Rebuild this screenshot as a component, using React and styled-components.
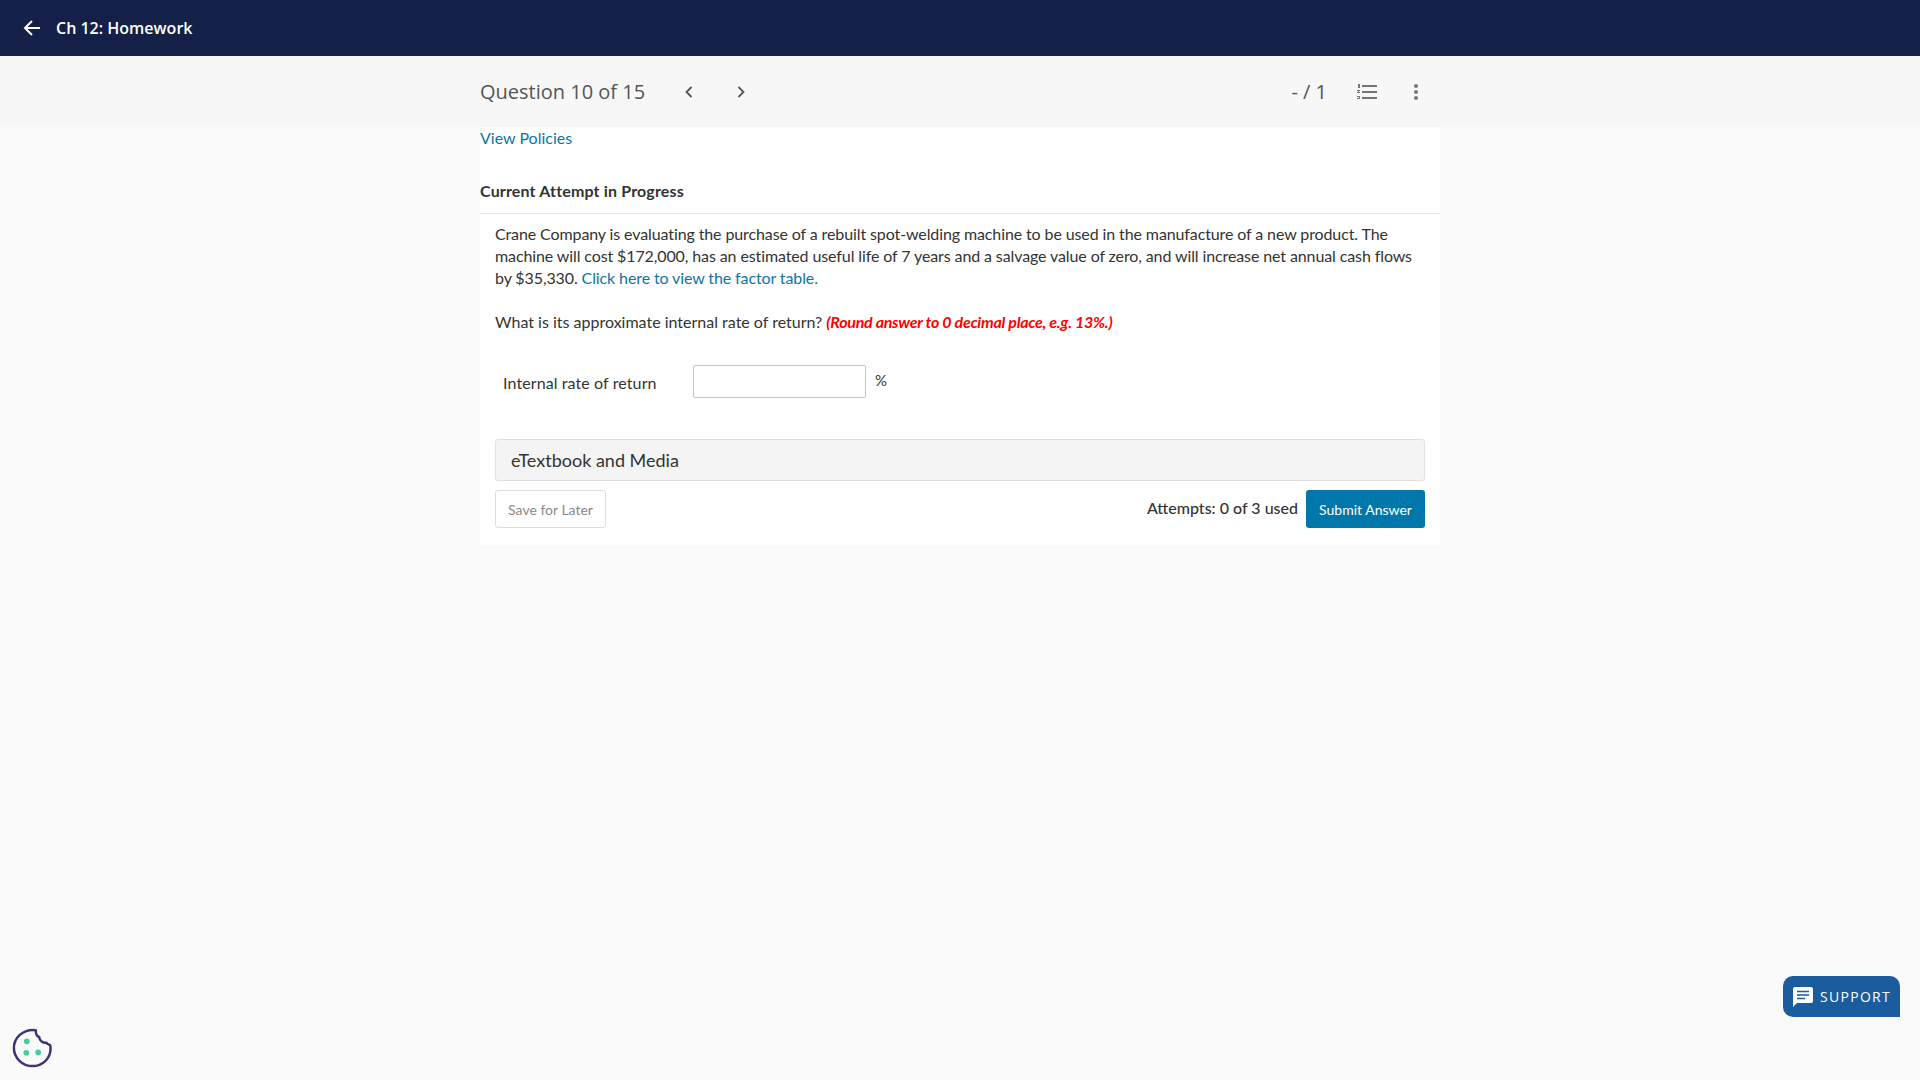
import React from "react";
import styled, { createGlobalStyle } from "styled-components";

const Global = createGlobalStyle`
  html, body { margin: 0; padding: 0; background: #fafafa; }
  * { box-sizing: border-box; }
`;

const Page = styled.div`
  min-height: 1080px;
  background: #fafafa;
  font-family: Lato, sans-serif;
  color: #333;
  position: relative;
  overflow: hidden;
`;

const TopBar = styled.header`
  height: 56px;
  background: #142048;
  display: flex;
  align-items: center;
  padding-left: 22px;
  gap: 14px;
  color: #fff;
`;

const TopTitle = styled.span`
  font-family: "Open Sans", sans-serif;
  font-size: 16px;
  font-weight: 600;
`;

const SubBar = styled.div`
  height: 71px;
  background: #f7f7f7;
  display: flex;
  justify-content: center;
`;

const SubInner = styled.div`
  width: 960px;
  display: flex;
  align-items: center;
`;

const QuestionTitle = styled.span`
  font-family: "Open Sans", sans-serif;
  font-size: 20px;
  color: #555;
  width: 203px;
`;

const NavArrow = styled.span`
  width: 52px;
  display: flex;
  color: #555;
`;

const Score = styled.span`
  margin-left: auto;
  font-family: "Open Sans", sans-serif;
  font-size: 20px;
  color: #555;
  margin-right: 30px;
`;

const MenuIcons = styled.div`
  display: flex;
  align-items: center;
  gap: 36px;
  margin-right: 21px;
  color: #757575;
`;

const Panel = styled.main`
  width: 960px;
  height: 418px;
  margin: 0 auto;
  background: #fff;
  display: flex;
  flex-direction: column;
`;

const PolicyLink = styled.a`
  color: #0d75a8;
  font-size: 16px;
  line-height: 20px;
  margin-top: 1px;
`;

const AttemptTitle = styled.div`
  font-size: 16px;
  font-weight: 700;
  color: #333;
  letter-spacing: 0.16px;
  line-height: 22px;
  height: 34px;
  margin-top: 32px;
  border-bottom: 1px solid #e8e8e8;
`;

const Body = styled.div`
  padding: 9px 15px 0;
`;

const Para = styled.p`
  margin: 0;
  font-size: 16px;
  line-height: 22px;
  letter-spacing: -0.11px;
  color: #333;
`;

const Question = styled(Para)`
  margin-top: 22px;
  letter-spacing: 0;
`;

const TextLink = styled.a`
  color: #0d75a8;
`;

const Hint = styled.em`
  color: #ff0000;
  font-weight: 700;
  letter-spacing: -0.27px;
`;

const AnswerRow = styled.div`
  display: flex;
  align-items: center;
  margin-top: 32px;
  padding-left: 8px;
`;

const AnswerLabel = styled.label`
  font-size: 16px;
  letter-spacing: 0.1px;
  width: 190px;
  color: #333;
  padding-top: 1px;
`;

const AnswerInput = styled.input`
  width: 173px;
  height: 33px;
  border: 1px solid #c4c4c4;
  border-radius: 2px;
  background: #fff;
`;

const Unit = styled.span`
  font-size: 15px;
  margin-left: 9px;
  margin-top: -3px;
  color: #333;
`;

const MediaBar = styled.div`
  height: 42px;
  margin-top: 41px;
  background: #f4f4f4;
  border: 1px solid #e0e0e0;
  border-radius: 3px;
  padding-left: 15px;
  display: flex;
  align-items: center;
  font-size: 18px;
  color: #333;
`;

const Footer = styled.div`
  display: flex;
  align-items: center;
  margin-top: 9px;
`;

const SaveButton = styled.button`
  width: 111px;
  height: 38px;
  background: #fff;
  border: 1px solid #ddd;
  border-radius: 3px;
  color: #8a8a8a;
  font-family: Lato, sans-serif;
  font-size: 14px;
`;

const Attempts = styled.span`
  margin-left: auto;
  font-size: 16px;
  font-weight: 500;
  color: #333;
  margin-right: 8px;
  margin-top: -3px;
`;

const SubmitButton = styled.button`
  width: 119px;
  height: 38px;
  background: #0077aa;
  border: none;
  border-radius: 3px;
  color: #fff;
  font-family: Lato, sans-serif;
  font-size: 14px;
`;

const Support = styled.div`
  position: absolute;
  left: 1783px;
  top: 976px;
  width: 117px;
  height: 41px;
  background: #1b5c9e;
  border-radius: 10px 10px 0 10px;
  color: #fff;
  display: flex;
  align-items: center;
  padding-left: 10px;
  gap: 7px;
  font-family: "Open Sans", sans-serif;
  font-size: 14px;
  letter-spacing: 1.3px;
`;

const Cookie = styled.div`
  position: absolute;
  left: 12px;
  top: 1028px;
  display: flex;
`;

export default function App() {
  return (
    <Page>
      <Global />
      <TopBar>
        <svg width="20" height="20" viewBox="0 0 20 20" fill="none" stroke="#fff" strokeWidth="2">
          <path d="M18 10H3M10 3l-7 7 7 7" />
        </svg>
        <TopTitle>Ch 12: Homework</TopTitle>
      </TopBar>
      <SubBar>
        <SubInner>
          <QuestionTitle>Question 10 of 15</QuestionTitle>
          <NavArrow>
            <svg width="12" height="14" viewBox="0 0 12 14" fill="none" stroke="currentColor" strokeWidth="1.8">
              <path d="M8.5 2L3.5 7l5 5" />
            </svg>
          </NavArrow>
          <NavArrow>
            <svg width="12" height="14" viewBox="0 0 12 14" fill="none" stroke="currentColor" strokeWidth="1.8">
              <path d="M3.5 2l5 5-5 5" />
            </svg>
          </NavArrow>
          <Score>- / 1</Score>
          <MenuIcons>
            <svg width="20" height="16" viewBox="0 0 20 16" fill="currentColor">
              <rect x="5" y="1" width="15" height="2" />
              <rect x="5" y="7" width="15" height="2" />
              <rect x="5" y="13" width="15" height="2" />
              <rect x="1" y="0" width="2" height="4" />
              <rect x="0" y="6" width="3" height="1" />
              <rect x="0" y="8" width="3" height="1" />
              <rect x="1" y="7" width="1" height="1" />
              <rect x="0" y="12" width="3" height="1" />
              <rect x="0" y="14" width="3" height="1" />
              <rect x="2" y="12" width="1" height="3" />
            </svg>
            <svg width="6" height="16" viewBox="0 0 6 16" fill="currentColor">
              <circle cx="3" cy="2" r="2" />
              <circle cx="3" cy="8" r="2" />
              <circle cx="3" cy="14" r="2" />
            </svg>
          </MenuIcons>
        </SubInner>
      </SubBar>
      <Panel>
        <PolicyLink>View Policies</PolicyLink>
        <AttemptTitle>Current Attempt in Progress</AttemptTitle>
        <Body>
          <Para>
            Crane Company is evaluating the purchase of a rebuilt spot-welding machine to be used in the manufacture of a new product. The machine will cost $172,000, has an estimated useful life of 7 years and a salvage value of zero, and will increase net annual cash flows by $35,330. <TextLink>Click here to view the factor table.</TextLink>
          </Para>
          <Question>
            What is its approximate internal rate of return? <Hint>(Round answer to 0 decimal place, e.g. 13%.)</Hint>
          </Question>
          <AnswerRow>
            <AnswerLabel>Internal rate of return</AnswerLabel>
            <AnswerInput />
            <Unit>%</Unit>
          </AnswerRow>
          <MediaBar>eTextbook and Media</MediaBar>
          <Footer>
            <SaveButton>Save for Later</SaveButton>
            <Attempts>Attempts: 0 of 3 used</Attempts>
            <SubmitButton>Submit Answer</SubmitButton>
          </Footer>
        </Body>
      </Panel>
      <Support>
        <svg width="20" height="20" viewBox="0 0 20 20">
          <path d="M2 0h16a2 2 0 0 1 2 2v12a2 2 0 0 1-2 2H4l-4 4V2a2 2 0 0 1 2-2z" fill="#fff" />
          <path d="M4 4.500h12M4 8h12M4 11.500h8" stroke="#1b5c9e" strokeWidth="1.6" />
        </svg>
        SUPPORT
      </Support>
      <Cookie>
        <svg width="40" height="40" viewBox="0 0 42 42" fill="none">
          <path d="M22 2c1 0 2 0 3 .5 0 3 .5 6 3.500 7 .5 4 4 6.500 7.500 6 1 1.500 2.500 2 4 2.500.5 1.500.5 2.500.5 3.500C40.500 32 32 40 21.500 40 11 40 2 31.500 2 21S11 2 22 2z" stroke="#3b3579" strokeWidth="2.600" />
          <circle cx="15.500" cy="14" r="3" fill="#3fd19c" />
          <circle cx="15" cy="26" r="3" fill="#3fd19c" />
          <circle cx="27.500" cy="25.500" r="3" fill="#3fd19c" />
        </svg>
      </Cookie>
    </Page>
  );
}
